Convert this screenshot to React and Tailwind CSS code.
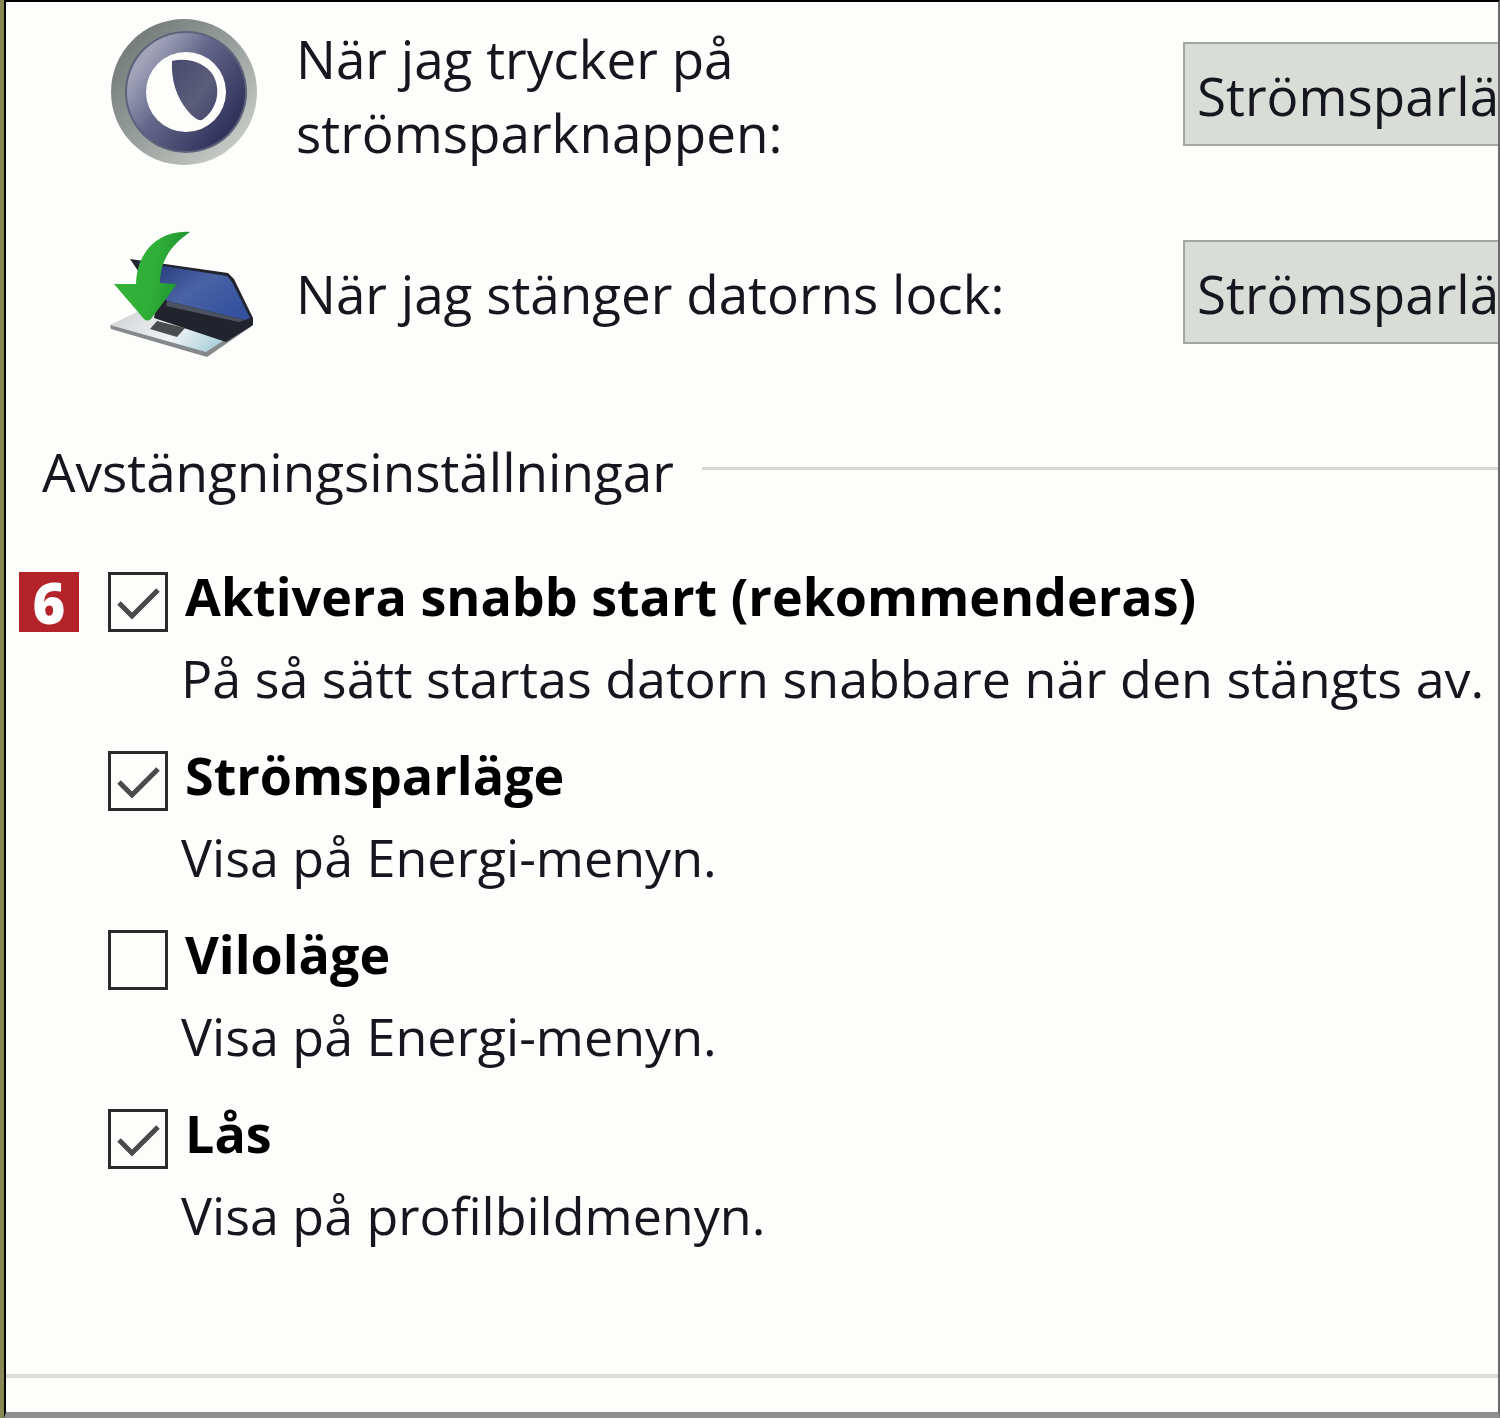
import { useState } from 'react';

const powerActions = [
  { id: 'sleep-button', label: 'När jag trycker på strömsparknappen:', Icon: SleepButtonIcon },
  { id: 'lid', label: 'När jag stänger datorns lock:', Icon: LaptopLidIcon },
];

const shutdownOptions = [
  {
    id: 'fast-start',
    step: 6,
    label: 'Aktivera snabb start (rekommenderas)',
    text: 'På så sätt startas datorn snabbare när den stängts av. Omstart påverkas inte.',
    checked: true,
  },
  { id: 'sleep', label: 'Strömsparläge', text: 'Visa på Energi-menyn.', checked: true },
  { id: 'hibernate', label: 'Viloläge', text: 'Visa på Energi-menyn.', checked: false },
  { id: 'lock', label: 'Lås', text: 'Visa på profilbildmenyn.', checked: true },
];

function SleepButtonIcon() {
  return (
    <svg viewBox="0 1 150 150" className="h-[150px] w-[150px]" aria-hidden="true">
      <defs>
        <linearGradient id="ring" x1="0.1" y1="0.1" x2="0.9" y2="0.9">
          <stop offset="0" stopColor="#737977" />
          <stop offset="0.5" stopColor="#989e9b" />
          <stop offset="1" stopColor="#cbcfcb" />
        </linearGradient>
        <linearGradient id="face" x1="0.12" y1="0.25" x2="0.85" y2="0.8">
          <stop offset="0" stopColor="#a3a4ba" />
          <stop offset="0.4" stopColor="#64668a" />
          <stop offset="1" stopColor="#33345c" />
        </linearGradient>
        <linearGradient id="moon" x1="0" y1="0" x2="1" y2="1">
          <stop offset="0" stopColor="#484a6e" />
          <stop offset="0.6" stopColor="#5c5d7a" />
          <stop offset="1" stopColor="#41426b" />
        </linearGradient>
      </defs>
      <circle cx="75" cy="75" r="73" fill="url(#ring)" />
      <circle cx="77" cy="75" r="61" fill="#5d617a" />
      <circle cx="77" cy="75" r="59" fill="url(#face)" />
      <circle cx="77" cy="75" r="40" fill="#fdfefc" />
      <path d="M63 44 C79 40 96 46 104 58 C112 72 109 92 93 103 C88 104 83 99 78 93 C68 81 62 64 63 44Z" fill="url(#moon)" />
    </svg>
  );
}

function LaptopLidIcon() {
  return (
    <svg viewBox="0 0 150 134" className="h-[134px] w-[150px]" aria-hidden="true">
      <defs>
        <linearGradient id="screen" x1="0" y1="0" x2="1" y2="0.7">
          <stop offset="0" stopColor="#1c2e6e" />
          <stop offset="0.55" stopColor="#4a63a5" />
          <stop offset="1" stopColor="#35519f" />
        </linearGradient>
        <linearGradient id="arrow" x1="0" y1="0" x2="1" y2="0.2">
          <stop offset="0" stopColor="#35b53b" />
          <stop offset="0.6" stopColor="#2fae38" />
          <stop offset="1" stopColor="#1f9030" />
        </linearGradient>
        <linearGradient id="deck" x1="0" y1="0" x2="1" y2="0.3">
          <stop offset="0" stopColor="#cfd0d2" />
          <stop offset="0.6" stopColor="#f0f3f3" />
          <stop offset="1" stopColor="#a9cfda" />
        </linearGradient>
      </defs>
      <path d="M1 100 L28 87 L130 108 L97 128Z" fill="url(#deck)" />
      <path d="M1 100 L97 127 L143 97 L143 101 L98 132 L2 104Z" fill="#85898b" />
      <path d="M21 34 L119 48 L125 54 L144 93 L144 100 L117 117 L45 93 L48 74Z" fill="#22242d" />
      <path d="M28 37 L118 51 L123 57 L141 93 L136 95 L58 76Z" fill="url(#screen)" />
      <path d="M58 76 L136 95 L130 97 L57 81Z" fill="#4c5260" />
      <path d="M48 96 L76 103 L68 112 L41 104Z" fill="#4b4c4d" />
      <path
        d="M81 7 C52 5 28 24 27 59 L5 59 L35 94 Q38 97 42 94 L68 59 L51 58 C51 36 62 20 81 7Z"
        fill="url(#arrow)"
      />
    </svg>
  );
}

function PowerAction({ id, label, Icon }) {
  return (
    <div className="flex items-center">
      <div className="w-[187px] shrink-0 self-start">
        <Icon />
      </div>
      <label htmlFor={id} className="w-[887px] shrink-0 pt-1 pr-[140px]">
        {label}
      </label>
      <select
        id={id}
        className="h-[104px] w-[560px] shrink-0 appearance-none border-2 border-[#a3a7a3] bg-[#dadcd7] px-3 pt-1"
      >
        <option>Strömsparläge</option>
        <option>Viloläge</option>
        <option>Stäng av</option>
      </select>
    </div>
  );
}

function ShutdownOption({ id, step, label, text, checked }) {
  const [on, setOn] = useState(checked);

  return (
    <div className="grid grid-cols-[60px_60px_1fr] gap-x-[29px] text-[52px] leading-[82px]">
      <div className="flex items-center pt-3">
        {step && (
          <span className="flex h-[60px] w-[60px] items-center justify-center bg-[#b5232a] text-[56px] font-extrabold text-white">
            {step}
          </span>
        )}
      </div>
      <div className="relative flex items-center pt-3">
        <input
          id={id}
          type="checkbox"
          checked={on}
          onChange={() => setOn(!on)}
          className="h-[60px] w-[60px] appearance-none border-3 border-[#2b2b2b] bg-[#fdfefc]"
        />
        {on && (
          <svg
            viewBox="0 0 60 60"
            className="pointer-events-none absolute h-[60px] w-[60px]"
            fill="none"
            stroke="#4a4a4a"
            strokeWidth="5"
            aria-hidden="true"
          >
            <path d="M11 31 L24 44 L50 18" />
          </svg>
        )}
      </div>
      <label htmlFor={id} className="-ml-3 font-bold whitespace-nowrap text-black">
        {label}
      </label>
      <p className="col-start-3 -ml-4 whitespace-nowrap">{text}</p>
    </div>
  );
}

export default function App() {
  return (
    <div className="flex min-h-screen flex-col bg-[#8a8757] pl-1">
      <main className="flex grow flex-col overflow-hidden border-2 border-b-[6px] border-black border-r-[#6a6a6a] border-b-[#8f908f] bg-[#fdfefc] font-['Open_Sans','Noto_Sans',sans-serif] text-[53px] leading-[74px] text-[#16161f]">
        <section className="flex flex-col gap-[55px] pt-4 pl-[103px]">
          {powerActions.map((action) => (
            <PowerAction key={action.id} {...action} />
          ))}
        </section>

        <section className="mt-[68px]">
          <div className="flex items-center gap-7 pl-9">
            <h2 className="pt-2">Avstängningsinställningar</h2>
            <div className="h-[3px] grow bg-[#d5d7d2]" />
          </div>
          <div className="mt-[46px] flex flex-col gap-[15px] pl-[13px]">
            {shutdownOptions.map((option) => (
              <ShutdownOption key={option.id} {...option} />
            ))}
          </div>
        </section>

        <footer className="mt-auto h-[38px] border-t-4 border-[#d9dbd6]" />
      </main>
    </div>
  );
}
